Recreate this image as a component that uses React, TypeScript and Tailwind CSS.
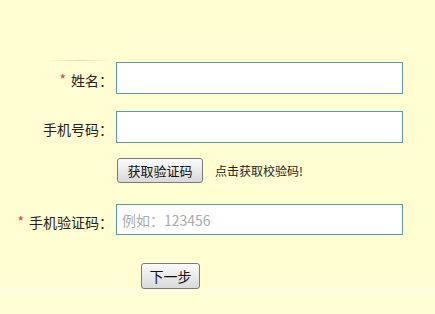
import React from "react";

const font = { fontFamily: '"SimSun","Noto Sans CJK SC","DejaVu Sans",sans-serif' };

function Label({ text, required }: { text: string; required?: boolean }) {
  return (
    <div className="w-[116px] shrink-0 pr-[3px] pt-[4px] flex justify-end items-center text-[14px] text-[#222]">
      {required && <span className="text-[#d44] mr-[5px] text-[14px] -mt-[2px]">*</span>}
      <span>{text}</span>
    </div>
  );
}

function Btn({ children, className }: { children: React.ReactNode; className: string }) {
  return (
    <button
      className={`border border-[#7a7a7a] rounded-[3px] bg-gradient-to-b from-[#fbfbfb] to-[#d9d9d9] text-[#111] flex items-center justify-center ${className}`}
      style={font}
    >
      {children}
    </button>
  );
}

export default function App() {
  return (
    <div className="w-[435px] h-[314px] bg-[#fffdd1] overflow-hidden flex flex-col relative" style={font}>
      <div className="h-[61px] flex items-end pl-[48px] shrink-0">
        <div className="w-[62px] h-[1px] bg-gradient-to-r from-[#fffdd1] via-[#e8d9a8] to-[#fffdd1]" />
      </div>
      <div className="flex h-[33px] mt-[1px]">
        <Label text="姓名：" required />
        <input className="w-[287px] h-[32px] border border-[#5b9aa0] bg-white outline-none" />
      </div>
      <div className="flex h-[32px] mt-[16px]">
        <Label text="手机号码：" />
        <input className="w-[287px] h-[32px] border border-[#5b9aa0] bg-white outline-none" />
      </div>
      <div className="flex items-center h-[25px] mt-[15px] pl-[117px]">
        <Btn className="w-[86px] h-[25px] text-[13px]">获取验证码</Btn>
        <span className="ml-[12px] text-[12px] text-[#222]">点击获取校验码!</span>
      </div>
      <div className="flex h-[32px] mt-[21px]">
        <Label text="手机验证码：" required />
        <input
          placeholder="例如：123456"
          className="w-[287px] h-[31px] border border-[#5b9aa0] bg-white outline-none pl-[5px] text-[14px] placeholder:text-[#aaa]"
          style={font}
        />
      </div>
      <div className="flex h-[26px] mt-[27px] pl-[141px]">
        <Btn className="w-[59px] h-[26px] text-[14px]">下一步</Btn>
      </div>
      <div className="h-[3px] bg-[#fffde6] mt-[1px]" />
      <div className="flex-1 bg-[#fffdd3]" />
    </div>
  );
}
